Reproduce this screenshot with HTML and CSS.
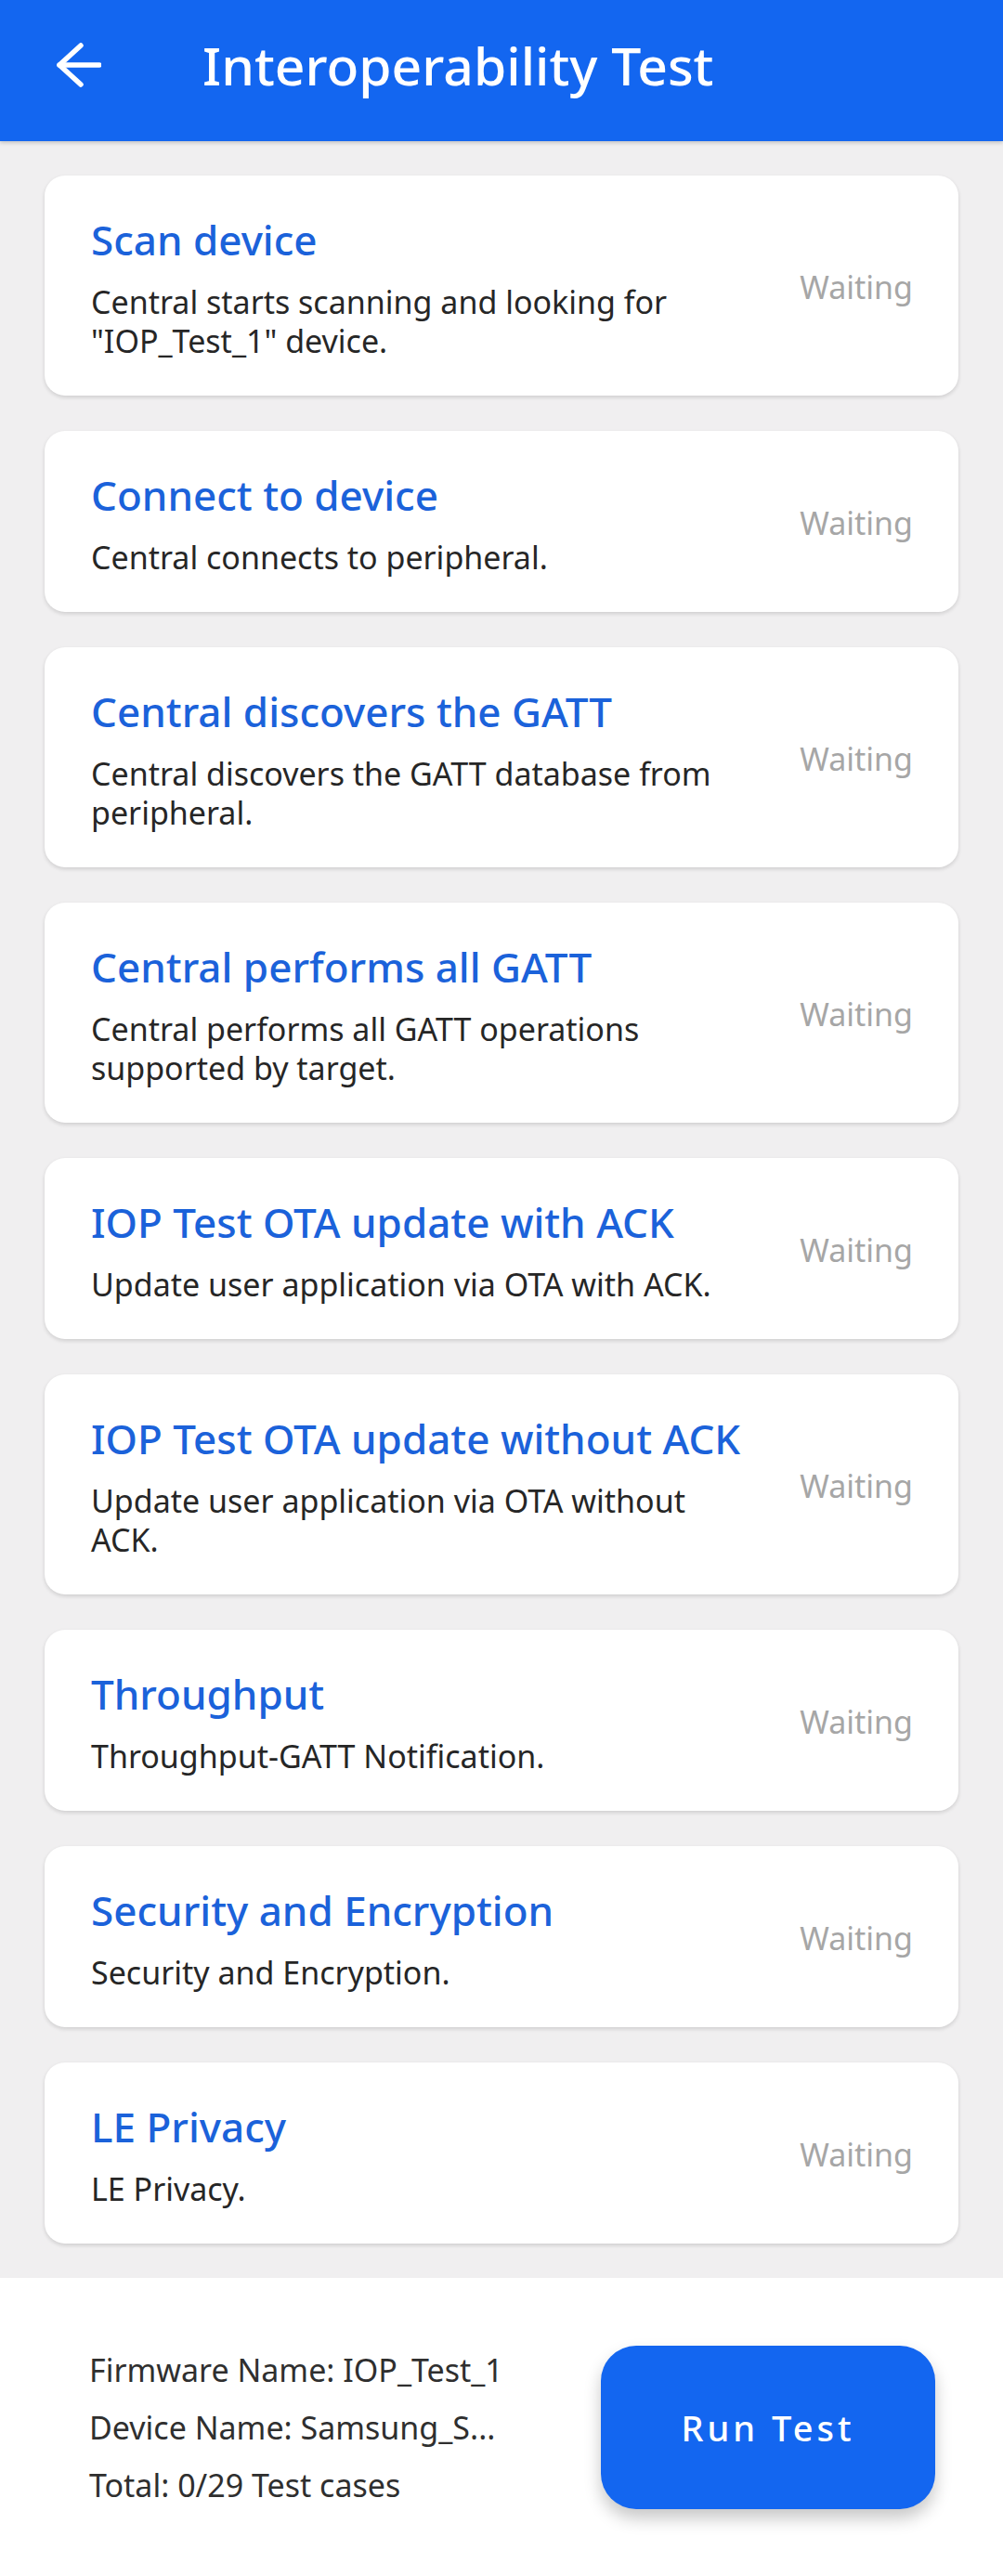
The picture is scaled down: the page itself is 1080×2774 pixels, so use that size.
FILE: index.html
```html
<!DOCTYPE html>
<html lang="en">
<head>
<meta charset="utf-8">
<title>Interoperability Test</title>
<link rel="stylesheet" href="styles.css">
</head>
<body>
<div class="screen">
  <header class="appbar">
    <button class="back" aria-label="Back">
      <svg width="48" height="48" viewBox="0 0 48 48" fill="none" stroke="#fff" stroke-width="5.5" stroke-linecap="round" stroke-linejoin="round">
        <path d="M46 24H3"/>
        <path d="M26 3L3 24L26 45"/>
      </svg>
    </button>
    <h1 class="appbar-title">Interoperability Test</h1>
  </header>

  <main class="list">
    <div class="card">
      <div class="card-text">
        <div class="card-title">Scan device</div>
        <div class="card-desc">Central starts scanning and looking for "IOP_Test_1" device.</div>
      </div>
      <div class="status">Waiting</div>
    </div>
    <div class="card">
      <div class="card-text">
        <div class="card-title">Connect to device</div>
        <div class="card-desc">Central connects to peripheral.</div>
      </div>
      <div class="status">Waiting</div>
    </div>
    <div class="card">
      <div class="card-text">
        <div class="card-title">Central discovers the GATT</div>
        <div class="card-desc">Central discovers the GATT database from peripheral.</div>
      </div>
      <div class="status">Waiting</div>
    </div>
    <div class="card">
      <div class="card-text">
        <div class="card-title">Central performs all GATT</div>
        <div class="card-desc">Central performs all GATT operations supported by target.</div>
      </div>
      <div class="status">Waiting</div>
    </div>
    <div class="card">
      <div class="card-text">
        <div class="card-title">IOP Test OTA update with ACK</div>
        <div class="card-desc">Update user application via OTA with ACK.</div>
      </div>
      <div class="status">Waiting</div>
    </div>
    <div class="card">
      <div class="card-text">
        <div class="card-title">IOP Test OTA update without ACK</div>
        <div class="card-desc">Update user application via OTA without ACK.</div>
      </div>
      <div class="status">Waiting</div>
    </div>
    <div class="card">
      <div class="card-text">
        <div class="card-title">Throughput</div>
        <div class="card-desc">Throughput-GATT Notification.</div>
      </div>
      <div class="status">Waiting</div>
    </div>
    <div class="card">
      <div class="card-text">
        <div class="card-title">Security and Encryption</div>
        <div class="card-desc">Security and Encryption.</div>
      </div>
      <div class="status">Waiting</div>
    </div>
    <div class="card">
      <div class="card-text">
        <div class="card-title">LE Privacy</div>
        <div class="card-desc">LE Privacy.</div>
      </div>
      <div class="status">Waiting</div>
    </div>
  </main>

  <footer class="panel">
    <div class="info">
      <div class="info-line">Firmware Name: IOP_Test_1</div>
      <div class="info-line">Device Name: Samsung_S...</div>
      <div class="info-line">Total: 0/29 Test cases</div>
    </div>
    <button class="run">Run Test</button>
  </footer>
</div>
</body>
</html>
```

FILE: styles.css
```css
* { box-sizing: border-box; }

html, body {
  margin: 0;
  padding: 0;
}

body {
  width: 1080px;
  height: 2774px;
  background: #f0eff0;
  font-family: "Noto Sans", "Open Sans", sans-serif;
  overflow: hidden;
}

.screen {
  display: flex;
  flex-direction: column;
  height: 2774px;
}

.appbar {
  height: 152px;
  flex-shrink: 0;
  background: #1366f0;
  display: flex;
  align-items: center;
  padding: 0 0 12px 61px;
  box-shadow: 0 2px 4px rgba(0, 0, 0, 0.18);
  position: relative;
  z-index: 1;
}

.back {
  width: 48px;
  height: 48px;
  padding: 0;
  border: 0;
  background: transparent;
  display: flex;
}

.appbar-title {
  margin: 0 0 0 109px;
  color: #fff;
  font-size: 57px;
  font-weight: 500;
  line-height: 1;
  letter-spacing: 0;
}

.list {
  flex: 1;
  display: flex;
  flex-direction: column;
  gap: 38px;
  padding: 37px 48px 0;
}

.card {
  background: #fff;
  border-radius: 22px;
  box-shadow: 0 2px 4px rgba(0, 0, 0, 0.14);
  display: flex;
  align-items: center;
  padding: 41px 49px 38px 50px;
}

.card-text {
  width: 716px;
  flex-shrink: 0;
}

.card-title {
  color: #1b62da;
  font-size: 44px;
  font-weight: 500;
  line-height: 56px;
  margin-bottom: 18px;
}

.card-desc {
  color: #262626;
  font-size: 34px;
  line-height: 42px;
}

.status {
  margin-left: auto;
  color: #a6a6a6;
  font-size: 34px;
  line-height: 42px;
}

.panel {
  height: 321px;
  flex-shrink: 0;
  background: #fff;
  display: flex;
  align-items: center;
  justify-content: space-between;
  padding: 0 73px 0 96px;
}

.info-line {
  color: #2f2f2f;
  font-size: 34px;
  line-height: 62px;
}

.run {
  width: 360px;
  height: 176px;
  border: 0;
  border-radius: 38px;
  background: #1366f0;
  color: #fff;
  font-family: "Noto Sans", "Open Sans", sans-serif;
  font-size: 38px;
  font-weight: 500;
  letter-spacing: 4px;
  box-shadow: 0 10px 18px rgba(0, 0, 0, 0.22);
}
```
